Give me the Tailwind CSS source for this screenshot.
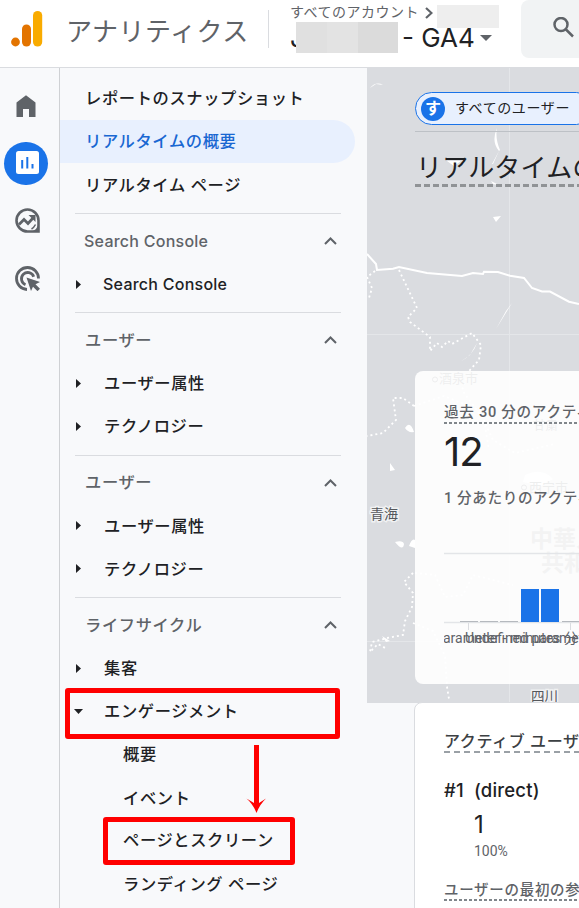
<!DOCTYPE html>
<html lang="ja">
<head>
  <meta charset="UTF-8">
  <meta name="viewport" content="width=device-width, initial-scale=1">
  <title>アナリティクス</title>
  <script src="https://cdn.jsdelivr.net/npm/@tailwindcss/browser@4"></script>
</head>
<body class="h-[908px] w-[579px] overflow-hidden bg-[#f8f9fb] font-['Inter','Noto_Sans_CJK_JP',sans-serif] text-[#202124]">
  <!-- Header -->
  <header class="flex h-[68px] border-b border-[#dadce0] bg-white">
    <svg class="mt-[11px] ml-[11px] h-9 w-8 shrink-0" viewBox="0 0 32 36">
      <circle cx="4.5" cy="31" r="4.4" fill="#e37400"/>
      <rect x="11" y="13.5" width="9" height="22" rx="4.5" fill="#e37400"/>
      <rect x="22" y="0" width="9.200" height="35.500" rx="4.600" fill="#f9ab00"/>
    </svg>
    <div class="ml-[23px] w-[202px] shrink-0 whitespace-nowrap pt-[12px] text-[26px] leading-[40px] tracking-[0.5px] text-[#5f6368]">アナリティクス</div>
    <div class="mt-[10px] h-[38px] w-px shrink-0 bg-[#dadce0]"></div>
    <div class="ml-[21px] w-[231px] shrink-0">
      <div class="flex h-[22px] items-center text-[14px] tracking-[0.5px] text-[#5f6368]">
        <span class="whitespace-nowrap">すべてのアカウント</span>
        <svg class="relative top-[2px] ml-[6px] h-3 w-2" viewBox="0 0 8 12" fill="none" stroke="#5f6368" stroke-width="2.200"><path d="M1 1l5.500 5L1 11"/></svg>
        <span class="relative top-[5px] ml-[4px] h-[23px] w-[62px] bg-[#eeeeee]"></span>
      </div>
      <div class="mt-px flex h-[30px] items-center text-[26px] leading-[30px]">
        <span class="w-[6px] overflow-hidden">J</span>
        <span class="-mt-[1px] flex h-[31px] w-[102px]">
          <span class="w-[31px] bg-[#e0e0e0]"></span>
          <span class="w-[31px] bg-[#e3e3e3]"></span>
          <span class="w-10 bg-[#dbdbdb]"></span>
        </span>
        <span class="ml-[4px] whitespace-nowrap">- GA4</span>
        <svg class="ml-[5px] h-[6px] w-3" viewBox="0 0 12 6"><path d="M0 0h12L6 6z" fill="#5f6368"/></svg>
      </div>
    </div>
    <div class="h-[58px] w-20 shrink-0 rounded-lg bg-[#f1f3f4] pt-[17px] pl-8">
      <svg class="h-[22px] w-[22px]" viewBox="0 0 22 22" fill="none" stroke="#5f6368" stroke-width="2.500"><circle cx="8" cy="7.500" r="6.500"/><path d="M12.500 12l7.500 7.500"/></svg>
    </div>
  </header>

  <div class="flex h-[840px]">
    <!-- Icon rail -->
    <aside class="flex w-[60px] shrink-0 flex-col border-r border-[#cfd1d4] pl-1">
      <div class="mt-[16px] flex h-11 w-11 items-center justify-center">
        <svg class="h-[22px] w-5" viewBox="0 0 20 22"><path d="M.5 7.500L10 .3l9.500 7.200V22h-6.500v-8H7v8H.5z" fill="#5f6368"/></svg>
      </div>
      <div class="mt-[14px] flex h-[43px] w-11 items-center justify-center rounded-full bg-[#1a73e8]">
        <svg class="ml-[2px] -mt-[2px] h-[23px] w-[23px]" viewBox="0 0 23 23"><rect width="23" height="23" rx="2.500" fill="#fff"/><path d="M6.200 9v8.500M11.300 6v11.500M16.500 13v4.500" stroke="#1a73e8" stroke-width="2"/></svg>
      </div>
      <div class="mt-[13px] flex h-11 w-[46px] items-center justify-center">
        <svg class="h-[25px] w-[25px]" viewBox="0 0 25 25" fill="none" stroke="#5f6368">
          <path d="M23.500 12.500a11 11 0 1 0-11 11h11z" stroke-width="2.600"/>
          <path d="M16.500 23.500q6-2 7-8v8z" fill="#5f6368" stroke="none"/>
          <path d="M20.500 16.500q-1.500 3-4 4.500" stroke-width="1.500"/>
          <path d="M4 16.500l5-5 4 4 5.500-6" stroke-width="2.700"/>
          <path d="M13.500 7h7v7z" fill="#5f6368" stroke="none"/>
        </svg>
      </div>
      <div class="mt-[14px] flex h-11 w-[46px] items-center justify-center">
        <svg class="h-[25px] w-[25px]" viewBox="0 0 25 25" fill="none" stroke="#5f6368" stroke-width="2.800">
          <path d="M12 23.500a11 11 0 1 1 11.500-11"/>
          <path d="M10.500 18.700a6.300 6.300 0 1 1 8.200-8"/>
          <path d="M11.500 11.500l13.500 4.500-4.500 2.200 4.500 4.500-2.500 2.500-4.500-4.500-2 4.300z" fill="#5f6368" stroke="none"/>
        </svg>
      </div>
    </aside>

    <!-- Report navigation -->
    <nav class="relative w-[307px] shrink-0 whitespace-nowrap pt-[9px] text-[16.300px] font-medium tracking-[0.6px]">
      <div class="flex h-[43.2px] items-center pb-px pl-[25px]">レポートのスナップショット</div>
      <div class="mr-3 flex h-[43.2px] items-center rounded-r-full bg-[#e8f0fe] pb-px pl-[25px] text-[#1967d2]">リアルタイムの概要</div>
      <div class="flex h-[43.2px] items-center pl-[25px]">リアルタイム ページ</div>

      <div class="my-[6px] ml-[15px] h-px w-[266px] bg-[#dadce0]"></div>
      <div class="flex h-[43.2px] items-center justify-between pr-[30px] pl-6 text-[#5f6368]">
        <span class="text-[16px] tracking-[0.25px]">Search Console</span>
        <svg class="h-2 w-[13px]" viewBox="0 0 13 8" fill="none" stroke="#5f6368" stroke-width="2"><path d="M1 7l5.500-5.500L12 7"/></svg>
      </div>
      <div class="flex h-[43.2px] items-center pl-4">
        <svg class="mr-[22px] h-[9px] w-[5px]" viewBox="0 0 5 9"><path d="M0 0l5 4.500L0 9z" fill="#202124"/></svg>
        <span class="text-[16px] tracking-[0.25px]">Search Console</span>
      </div>

      <div class="my-[6px] ml-[15px] h-px w-[266px] bg-[#dadce0]"></div>
      <div class="flex h-[43.2px] items-center justify-between pr-[30px] pb-px pl-[25px] text-[#5f6368]">
        <span>ユーザー</span>
        <svg class="h-2 w-[13px]" viewBox="0 0 13 8" fill="none" stroke="#5f6368" stroke-width="2"><path d="M1 7l5.500-5.500L12 7"/></svg>
      </div>
      <div class="flex h-[43.2px] items-center pb-px pl-4">
        <svg class="mr-[23px] h-[9px] w-[5px]" viewBox="0 0 5 9"><path d="M0 0l5 4.500L0 9z" fill="#202124"/></svg>
        <span>ユーザー属性</span>
      </div>
      <div class="flex h-[43.2px] items-center pb-px pl-4">
        <svg class="mr-[23px] h-[9px] w-[5px]" viewBox="0 0 5 9"><path d="M0 0l5 4.500L0 9z" fill="#202124"/></svg>
        <span>テクノロジー</span>
      </div>

      <div class="my-[6px] ml-[15px] h-px w-[266px] bg-[#dadce0]"></div>
      <div class="flex h-[43.2px] items-center justify-between pr-[30px] pb-px pl-[25px] text-[#5f6368]">
        <span>ユーザー</span>
        <svg class="h-2 w-[13px]" viewBox="0 0 13 8" fill="none" stroke="#5f6368" stroke-width="2"><path d="M1 7l5.500-5.500L12 7"/></svg>
      </div>
      <div class="flex h-[43.2px] items-center pb-px pl-4">
        <svg class="mr-[23px] h-[9px] w-[5px]" viewBox="0 0 5 9"><path d="M0 0l5 4.500L0 9z" fill="#202124"/></svg>
        <span>ユーザー属性</span>
      </div>
      <div class="flex h-[43.2px] items-center pb-px pl-4">
        <svg class="mr-[23px] h-[9px] w-[5px]" viewBox="0 0 5 9"><path d="M0 0l5 4.500L0 9z" fill="#202124"/></svg>
        <span>テクノロジー</span>
      </div>

      <div class="my-[6px] ml-[15px] h-px w-[266px] bg-[#dadce0]"></div>
      <div class="flex h-[43.2px] items-center justify-between pr-[30px] pb-px pl-[25px] text-[#5f6368]">
        <span>ライフサイクル</span>
        <svg class="h-2 w-[13px]" viewBox="0 0 13 8" fill="none" stroke="#5f6368" stroke-width="2"><path d="M1 7l5.500-5.500L12 7"/></svg>
      </div>
      <div class="flex h-[43.2px] items-center pb-px pl-4">
        <svg class="mr-[23px] h-[9px] w-[5px]" viewBox="0 0 5 9"><path d="M0 0l5 4.500L0 9z" fill="#202124"/></svg>
        <span>集客</span>
      </div>
      <div class="flex h-[43.2px] items-center pb-px pl-[14px]">
        <svg class="mr-[21px] h-[5px] w-[9px]" viewBox="0 0 9 5"><path d="M0 0h9L4.500 5z" fill="#202124"/></svg>
        <span>エンゲージメント</span>
      </div>
      <div class="flex h-[43.2px] items-center pb-[2px] pl-[63px]">概要</div>
      <div class="flex h-[43.2px] items-center pb-px pl-[63px]">イベント</div>
      <div class="flex h-[43.2px] items-center pb-[2px] pl-[63px]">ページとスクリーン</div>
      <div class="flex h-[43.2px] items-center pb-px pl-[63px]">ランディング ページ</div>

      <!-- Red annotations over the menu -->
      <div class="absolute top-[620px] left-[5px] h-[51px] w-[275px] rounded-[3px] border-[5px] border-[#ff0000]"></div>
      <div class="absolute top-[749px] left-[43px] h-[48px] w-[192px] rounded-[3px] border-[5px] border-[#ff0000]"></div>
      <svg class="absolute top-[677px] left-[186px] h-[68px] w-5" viewBox="0 0 20 68"><path d="M8 0h5v58l7-4.500Q14 59 10.500 68 7 59 .5 53.500L8 58z" fill="#f00"/></svg>
    </nav>

    <!-- Realtime overview -->
    <main class="relative w-[212px] shrink-0 overflow-hidden whitespace-nowrap">
      <svg class="absolute top-0 left-0 h-[635px] w-[212px] bg-[#dadce0]" viewBox="0 0 212 635" fill="none" stroke="#fff">
        <path d="M142.500 0v635M0 266.500h212M0 573.500h212" stroke="#e4e6e9"/>
        <path d="M0 186l9 10 1 6 16-1.300 6-1.700 28 6 35 3 11-3 10 1 1-2.300 14 .3 12 3.700 14 2.300 8 10 10 3.500h8l19 10.200 10 2.300" stroke-width="2"/>
        <g stroke-width="1.800" stroke-dasharray="2 3">
          <path d="M32 202l18 38-9 9 2 5 20 15v14l7-8 5 4 6-6 4 3 20-11 9 12-2 15-9 10-8 20 22 30 5 30"/>
          <path d="M8 203l-8 6 5 11-3 10M47 338l-11-8H26l3 22-13 13-16 3"/>
          <path d="M46 505l-9 9 9 11-1 14-7 14-2 14-16 3-15 4-2 10 8-8 9 5"/>
          <path d="M47 338l30-10 35 14 14 30 22 13 40-9M46 555l20 8 12 25 2 31 2 12M48 505l20 2 10 22 18-2 10-20 40 10"/>
        </g>
        <g fill="#fff" stroke="none">
          <path d="M3 20q6-7 13-3l-7-1zM130 60q-6 14 2 23l1-1q-5-12-3-22zM126 149l8-1-5 6zM145 235l-16 26 10-18zM110 275q-4 12-17 19l10-7zM38 360q5-8 9 4-6 1-9-4zM23 395v8l5-1zM28 474q8-2 9 2-1 8-9-2zM42 478q3-8 6-6v8zM15 568l8 5-4 1zM132 83l-7 13h1zM124 113l8 4-6-1zM80 93h14l-7 5zM158 407q17-8 28 4l-12 7-18-4z"/>
        </g>
        <g class="font-['Noto_Sans_CJK_JP',sans-serif]" fill="#55585c" stroke="#f1f2f3" stroke-width="3" paint-order="stroke">
          <text x="3" y="451" font-size="14">青海</text>
          <text x="164" y="633" font-size="13.500">四川</text>
        </g>
        <g class="font-['Noto_Sans_CJK_JP',sans-serif]" fill="#3c4043" stroke="none">
          <text x="72" y="315" font-size="13">酒泉市</text>
          <text x="166" y="362" font-size="12.500">甘粛</text>
          <text x="162" y="424" font-size="13">西宁市</text>
          <text x="163" y="479" font-size="23" font-weight="700" fill="#75797e">中華人民</text>
          <text x="174" y="503" font-size="23" font-weight="700" fill="#75797e">共和国</text>
        </g>
        <circle cx="68" cy="311.500" r="2.500" stroke="#3c4043"/>
        <circle cx="157" cy="419.500" r="2.500" stroke="#3c4043"/>
      </svg>

      <div class="relative pl-12">
        <div class="mt-6 flex h-[33px] w-[178px] items-center rounded-full border border-[#1a73e8] bg-[#e8f0fe] pl-[5px]">
          <span class="flex h-6 w-6 items-center justify-center rounded-full bg-[#1a73e8] pb-px text-[16px] leading-none font-bold text-white">す</span>
          <span class="ml-[10px] pb-[3px] text-[14px] tracking-[0.6px]">すべてのユーザー</span>
        </div>
        <div class="mt-[6px] h-px bg-[#bdc1c6]"></div>
        <h1 class="flex h-[52px] items-end pl-px text-[26px] leading-[32px] tracking-[0.2px]">リアルタイムの概要</h1>
        <div class="h-[3px] bg-[repeating-linear-gradient(90deg,#909396_0_6px,transparent_6px_9px)]"></div>

        <!-- Active users card -->
        <section class="mt-[184px] h-[313px] w-[220px] overflow-hidden rounded-lg bg-white/91 pl-[29px]">
          <h2 class="pt-[31px] font-['Roboto','Noto_Sans_CJK_JP',sans-serif] text-[14.600px] leading-[20px] font-medium tracking-[0.7px] text-[#5f6368]">過去 30 分のアクティブ ユーザー</h2>
          <div class="h-[2px] bg-[repeating-linear-gradient(90deg,#80868b_0_3px,transparent_3px_5px)]"></div>
          <div class="pt-[8px] text-[40px] leading-[40px] tracking-[-1px]">12</div>
          <h2 class="mt-[16px] font-['Roboto','Noto_Sans_CJK_JP',sans-serif] text-[14.600px] leading-[21px] font-medium tracking-[0.6px] text-[#5f6368]">1 分あたりのアクティブ ユーザー</h2>
          <svg class="mt-[41px] h-[100px] w-[136px]" viewBox="0 0 136 100">
            <path d="M0 3.500h136M0 72.500h136" stroke="#e3e5e8" stroke-width="1.500"/>
            <path d="M16 71.500h18M36 71.500h18M56 71.500h18M118 71.500h18" stroke="#b5b9be"/>
            <path d="M77 39h18v33H77zM97 39h18v33H97z" fill="#1a73e8"/>
            <path d="M24.500 73v7M126.500 73v7" stroke="#dadce0"/>
            <g class="font-['Roboto','Noto_Sans_CJK_JP',sans-serif]" font-size="14" fill="#5f6368">
              <text x="-1" y="93">arameter - minutes 分</text>
              <text x="21" y="93">Undefined parameter</text>
            </g>
          </svg>
        </section>

        <!-- First user source card -->
        <section class="mt-[18px] -ml-px h-[240px] w-[230px] rounded-tl-lg border border-[#dadce0] bg-white pl-[29px]">
          <h2 class="pt-[28px] text-[16px] leading-[20px] font-medium tracking-[0.6px] text-[#3c4043]">アクティブ ユーザー</h2>
          <div class="h-[2px] bg-[repeating-linear-gradient(90deg,#9aa0a6_0_6px,transparent_6px_10px)]"></div>
          <div class="mt-[25px] flex gap-[10px] text-[18.500px] leading-6 font-medium tracking-[0.2px]"><span>#1</span><span>(direct)</span></div>
          <div class="mt-[9px] pl-[30px] text-[24px] leading-7">1</div>
          <div class="pl-[30px] font-['Roboto',sans-serif] text-[14px] leading-6 text-[#5f6368]">100%</div>
          <div class="mt-[18px] text-[14.500px] leading-[17px] font-medium tracking-[0.7px] text-[#5f6368]">ユーザーの最初の参照元</div>
          <div class="mt-px h-[2px] bg-[repeating-linear-gradient(90deg,#80868b_0_3px,transparent_3px_5px)]"></div>
        </section>
      </div>
    </main>
  </div>
</body>
</html>
